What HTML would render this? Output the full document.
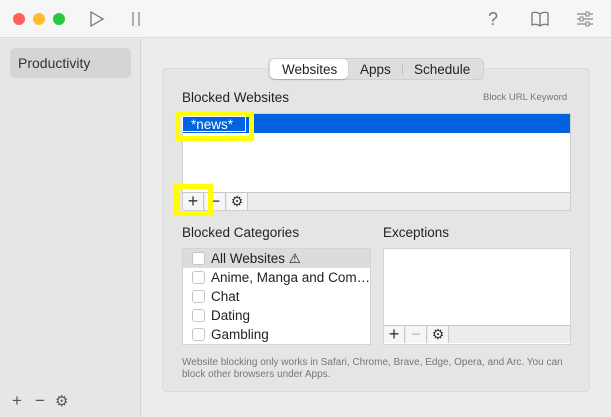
<!DOCTYPE html><html><head><style>
*{margin:0;padding:0;box-sizing:border-box}
body{width:611px;height:417px;overflow:hidden;font-family:"Liberation Sans",sans-serif;background:#ececec;position:relative;color:#222}
.a{position:absolute}
.tl{width:12px;height:12px;border-radius:50%;top:13px}
.t{font-size:13.5px}
.btnbar{background:#ececec;border-top:1px solid #c8c8c8;height:18px}
.b{position:absolute;top:0;width:21px;height:17px;border-right:1px solid #c8c8c8;text-align:center;font-size:18px;line-height:17px;color:#333;background:#f6f6f6}
.cb{position:absolute;left:9px;width:13px;height:13px;border:1px solid #c6c6c6;border-radius:3px;background:#fff}
.row{position:absolute;left:0;width:100%;height:19px;font-size:13.5px;line-height:19px;white-space:nowrap}
.row span{position:absolute;left:28px;white-space:nowrap}
</style></head><body>
<div class="a" style="left:0;top:0;width:611px;height:38px;background:#f6f6f6;border-bottom:1px solid #dcdcdc"></div>
<div class="a tl" style="left:13px;background:#fe5f57"></div>
<div class="a tl" style="left:33px;background:#febc2e"></div>
<div class="a tl" style="left:53px;background:#28c840"></div>
<svg class="a" style="left:88px;top:10px" width="18" height="18"><path d="M3 2 L15 9 L3 16 Z" fill="none" stroke="#777" stroke-width="1.3"/></svg>
<svg class="a" style="left:130px;top:10px" width="12" height="18"><path d="M3 2V16M9 2V16" stroke="#888" stroke-width="1.3"/></svg>
<div class="a" style="left:488px;top:9px;font-size:18px;color:#777">?</div>
<svg class="a" style="left:530px;top:10px" width="20" height="18"><path d="M10 4C7 2 4 2 2 3V15C4 14 7 14 10 16C13 14 16 14 18 15V3C16 2 13 2 10 4ZM10 4V16" fill="none" stroke="#777" stroke-width="1.3"/></svg>
<svg class="a" style="left:576px;top:10px" width="18" height="18"><path d="M1 4H17M1 9H17M1 14H17" stroke="#888" stroke-width="1.2"/><rect x="10" y="2" width="3" height="4" fill="#f6f6f6" stroke="#888"/><rect x="4" y="7" width="3" height="4" fill="#f6f6f6" stroke="#888"/><rect x="10" y="12" width="3" height="4" fill="#f6f6f6" stroke="#888"/></svg>
<div class="a" style="left:0;top:39px;width:141px;height:378px;background:#e6e6e6;border-right:1px solid #d4d4d4"></div>
<div class="a" style="left:10px;top:48px;width:121px;height:30px;background:#d5d5d5;border-radius:5px;font-size:14px;line-height:30px;padding-left:8px;color:#333">Productivity</div>
<div class="a" style="left:12px;top:391px;font-size:17px;color:#555">+</div>
<div class="a" style="left:35px;top:391px;font-size:17px;color:#555">−</div>
<div class="a" style="left:55px;top:392px;font-size:15px;color:#555">⚙</div>
<div class="a" style="left:162px;top:68px;width:428px;height:324px;background:#e5e5e5;border:1px solid #dadada;border-radius:5px"></div>
<div class="a" style="left:268px;top:58px;width:216px;height:22px;background:#dedede;border:1px solid #d0d0d0;border-radius:6px"></div>
<div class="a" style="left:270px;top:59px;width:78px;height:20px;background:#fff;border-radius:5px;box-shadow:0 1px 1px rgba(0,0,0,.2)"></div>
<div class="a t" style="left:282px;top:62px">Websites</div>
<div class="a t" style="left:360px;top:62px">Apps</div>
<div class="a" style="left:402px;top:63px;width:1px;height:12px;background:#c0c0c0"></div>
<div class="a t" style="left:414px;top:62px">Schedule</div>
<div class="a t" style="left:182px;top:90px">Blocked Websites</div>
<div class="a" style="left:483px;top:92px;font-size:9.5px;color:#777">Block URL Keyword</div>
<div class="a" style="left:182px;top:113px;width:389px;height:98px;background:#fff;border:1px solid #cfcfcf"></div>
<div class="a" style="left:183px;top:114px;width:387px;height:19px;background:#0262df"></div>
<div class="a" style="left:175px;top:112px;width:79px;height:29px;border:5px solid #ffff00"></div>
<div class="a" style="left:182px;top:116px;width:64px;height:16px;background:#0262df;border:1px solid #fff"></div>
<div class="a t" style="left:191px;top:117px;color:#fff">*news*</div>
<div class="a btnbar" style="left:183px;top:192px;width:387px">
<div class="b" style="left:0">+</div><div class="b" style="left:22px">−</div><div class="b" style="left:44px;font-size:14px">⚙</div></div>
<div class="a" style="left:174px;top:184px;width:39px;height:32px;border:5px solid #ffff00"></div>
<div class="a t" style="left:182px;top:225px">Blocked Categories</div>
<div class="a t" style="left:383px;top:225px">Exceptions</div>
<div class="a" style="left:182px;top:248px;width:189px;height:97px;background:#fff;border:1px solid #d4d4d4;overflow:hidden">
<div class="row" style="top:0;background:#dcdcdc"><div class="cb" style="top:3px"></div><span>All Websites ⚠</span></div>
<div class="row" style="top:19px"><div class="cb" style="top:3px"></div><span>Anime, Manga and Com…</span></div>
<div class="row" style="top:38px"><div class="cb" style="top:3px"></div><span>Chat</span></div>
<div class="row" style="top:57px"><div class="cb" style="top:3px"></div><span>Dating</span></div>
<div class="row" style="top:76px"><div class="cb" style="top:3px"></div><span>Gambling</span></div>
</div>
<div class="a" style="left:383px;top:248px;width:188px;height:97px;background:#fff;border:1px solid #d4d4d4"></div>
<div class="a btnbar" style="left:384px;top:325px;width:186px">
<div class="b" style="left:0">+</div><div class="b" style="left:22px;color:#bbb">−</div><div class="b" style="left:44px;font-size:14px">⚙</div></div>
<div class="a" style="left:182px;top:357px;width:392px;font-size:10px;line-height:12px;color:#777">Website blocking only works in Safari, Chrome, Brave, Edge, Opera, and Arc. You can block other browsers under Apps.</div>
</body></html>
